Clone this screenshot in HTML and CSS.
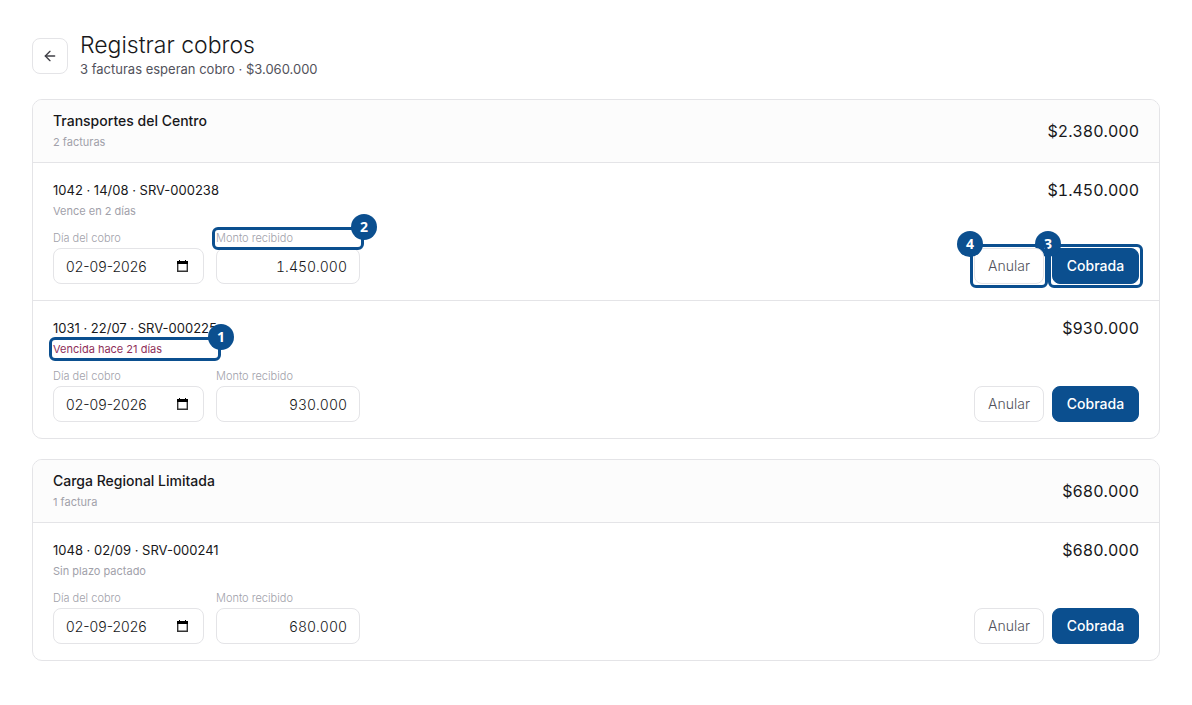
FILE: index.html
```html
<!DOCTYPE html>
<html lang="es">
<head>
  <meta charset="UTF-8">
  <meta name="viewport" content="width=device-width, initial-scale=1.0">
  <title>Registrar cobros</title>
  <link rel="stylesheet" href="styles.css">
</head>
<body>
  <header class="page-header">
    <button class="back" type="button" aria-label="Volver">
      <svg width="16" height="16" viewBox="0 0 24 24" fill="none" stroke="currentColor" stroke-width="2" stroke-linecap="round" stroke-linejoin="round"><path d="m12 19-7-7 7-7"/><path d="M19 12H5"/></svg>
    </button>
    <div>
      <h1>Registrar cobros</h1>
      <p class="summary">3 facturas esperan cobro · $3.060.000</p>
    </div>
  </header>

  <main class="clients">
    <section class="card">
      <div class="card-header">
        <div>
          <h2>Transportes del Centro</h2>
          <p class="note">2 facturas</p>
        </div>
        <span class="amount">$2.380.000</span>
      </div>

      <form class="invoice">
        <div class="invoice-top">
          <div class="invoice-info">
            <h3>1042 · 14/08 · SRV-000238</h3>
            <p class="note">Vence en 2 días</p>
          </div>
          <span class="amount">$1.450.000</span>
        </div>
        <div class="invoice-bottom">
          <div class="field field-date">
            <label for="date-1042">Día del cobro</label>
            <div class="date-box">
              <input id="date-1042" type="text" value="02-09-2026">
              <svg class="calendar" width="11" height="12" viewBox="0 0 11 12"><path d="M.7 3v8.3h9.6V3" fill="none" stroke="#333" stroke-width="1.4"/><path d="M0 4V1h2V0h1v1h5V0h1v1h2v3z"/></svg>
            </div>
          </div>
          <div class="field field-amount">
            <label class="marked" for="amount-1042">Monto recibido<span class="mark"><b>2</b></span></label>
            <input id="amount-1042" type="text" inputmode="numeric" value="1.450.000">
          </div>
          <div class="actions">
            <div class="marked marked-top">
              <button class="btn" type="button">Anular</button>
              <span class="mark mark-left"><b>4</b></span>
            </div>
            <div class="marked">
              <button class="btn btn-primary" type="button">Cobrada</button>
              <span class="mark mark-left"><b>3</b></span>
            </div>
          </div>
        </div>
      </form>

      <form class="invoice">
        <div class="invoice-top">
          <div class="invoice-info">
            <h3>1031 · 22/07 · SRV-000225</h3>
            <p class="note overdue marked">Vencida hace 21 días<span class="mark"><b>1</b></span></p>
          </div>
          <span class="amount">$930.000</span>
        </div>
        <div class="invoice-bottom">
          <div class="field field-date">
            <label for="date-1031">Día del cobro</label>
            <div class="date-box">
              <input id="date-1031" type="text" value="02-09-2026">
              <svg class="calendar" width="11" height="12" viewBox="0 0 11 12"><path d="M.7 3v8.3h9.6V3" fill="none" stroke="#333" stroke-width="1.4"/><path d="M0 4V1h2V0h1v1h5V0h1v1h2v3z"/></svg>
            </div>
          </div>
          <div class="field field-amount">
            <label for="amount-1031">Monto recibido</label>
            <input id="amount-1031" type="text" inputmode="numeric" value="930.000">
          </div>
          <div class="actions">
            <button class="btn" type="button">Anular</button>
            <button class="btn btn-primary" type="button">Cobrada</button>
          </div>
        </div>
      </form>
    </section>

    <section class="card">
      <div class="card-header">
        <div>
          <h2>Carga Regional Limitada</h2>
          <p class="note">1 factura</p>
        </div>
        <span class="amount">$680.000</span>
      </div>

      <form class="invoice">
        <div class="invoice-top">
          <div class="invoice-info">
            <h3>1048 · 02/09 · SRV-000241</h3>
            <p class="note">Sin plazo pactado</p>
          </div>
          <span class="amount">$680.000</span>
        </div>
        <div class="invoice-bottom">
          <div class="field field-date">
            <label for="date-1048">Día del cobro</label>
            <div class="date-box">
              <input id="date-1048" type="text" value="02-09-2026">
              <svg class="calendar" width="11" height="12" viewBox="0 0 11 12"><path d="M.7 3v8.3h9.6V3" fill="none" stroke="#333" stroke-width="1.4"/><path d="M0 4V1h2V0h1v1h5V0h1v1h2v3z"/></svg>
            </div>
          </div>
          <div class="field field-amount">
            <label for="amount-1048">Monto recibido</label>
            <input id="amount-1048" type="text" inputmode="numeric" value="680.000">
          </div>
          <div class="actions">
            <button class="btn" type="button">Anular</button>
            <button class="btn btn-primary" type="button">Cobrada</button>
          </div>
        </div>
      </form>
    </section>
  </main>
</body>
</html>
```
FILE: styles.css
```css
* {
  box-sizing: border-box;
}
body {
  margin: 0;
  padding: 32px;
  background: #fff;
  color: #18181b;
  font-family: Inter, sans-serif;
  font-size: 13px;
}
h1, h2, h3, p {
  margin: 0;
}
input, button {
  font: inherit;
  color: inherit;
}
.page-header {
  display: flex;
  align-items: center;
  gap: 12px;
  margin-bottom: 20px;
}
.back {
  display: flex;
  align-items: center;
  justify-content: center;
  width: 36px;
  height: 36px;
  padding: 0;
  border: 1px solid #e4e4e7;
  border-radius: 8px;
  background: #fff;
  color: #3f3f46;
}
h1 {
  font-size: 23px;
  line-height: 27px;
  font-weight: 300;
}
.summary {
  line-height: 20px;
  color: #52525b;
}
.clients {
  display: grid;
  gap: 20px;
}
.card {
  border: 1px solid #e4e4e7;
  border-radius: 10px;
}
.card-header {
  display: flex;
  align-items: center;
  justify-content: space-between;
  padding: 12px 20px;
  border-radius: 9px 9px 0 0;
  background: #fcfcfc;
}
h2 {
  margin-bottom: 4px;
  font-size: 14px;
  line-height: 18px;
  font-weight: 500;
}
h3 {
  margin-bottom: 2px;
  font-size: 13px;
  line-height: 22px;
  font-weight: 400;
}
.note {
  font-size: 11px;
  line-height: 16px;
  color: #a1a1aa;
}
.overdue {
  color: #8f2f5a;
}
.amount {
  font-size: 16px;
  line-height: 22px;
  font-weight: 400;
  font-variant-numeric: tabular-nums;
}
.invoice {
  padding: 16px 20px;
  border-top: 1px solid #e4e4e7;
}
.invoice-top {
  display: flex;
  align-items: flex-start;
  justify-content: space-between;
  margin-bottom: 12px;
}
.invoice-bottom {
  display: flex;
  align-items: flex-end;
  gap: 12px;
}
.field {
  display: grid;
  gap: 2px;
}
.field-date {
  width: 151px;
}
.field-amount {
  width: 144px;
}
.field label {
  font-size: 11px;
  line-height: 15px;
  font-weight: 300;
  color: #a1a1aa;
}
.field input {
  width: 100%;
  height: 36px;
  padding: 0 12px;
  border: 1px solid #e4e4e7;
  border-radius: 8px;
  background: #fff;
  font-size: 14px;
  font-weight: 300;
}
.field-amount input {
  text-align: right;
  font-variant-numeric: tabular-nums;
}
.date-box {
  position: relative;
}
.calendar {
  position: absolute;
  top: 12px;
  right: 16px;
}
.actions {
  display: flex;
  gap: 8px;
  margin-left: auto;
}
.btn {
  display: block;
  min-width: 70px;
  height: 36px;
  padding: 0 12px 2px;
  border: 1px solid #e4e4e7;
  border-radius: 8px;
  background: #fff;
  color: #52525b;
  font-size: 14px;
  font-weight: 300;
}
.btn-primary {
  min-width: 87px;
  border-color: #0b4f8f;
  background: #0b4f8f;
  color: #fff;
  font-weight: 500;
}

/* numbered call-outs */
.marked {
  position: relative;
}
.marked-top {
  z-index: 1;
}
.mark {
  position: absolute;
  inset: -4px;
  border: 3px solid #0b4f8f;
  border-radius: 6px;
  pointer-events: none;
}
.mark b {
  position: absolute;
  top: -16px;
  right: -16px;
  width: 26px;
  height: 26px;
  border-radius: 50%;
  background: #0b4f8f;
  color: #fff;
  font: 700 14px/26px "Noto Sans", sans-serif;
  text-align: center;
}
.mark-left b {
  right: auto;
  left: -16px;
}
```
